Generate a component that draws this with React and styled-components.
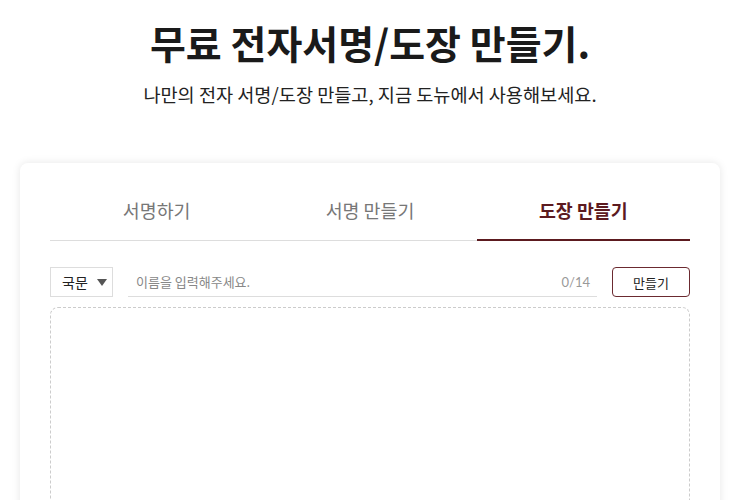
import React, { useState } from "react";
import styled, { createGlobalStyle } from "styled-components";

const Global = createGlobalStyle`
  * { box-sizing: border-box; }
  body {
    margin: 0;
    background: #fff;
    font-family: "Noto Sans CJK KR", "Noto Sans", sans-serif;
    color: #222;
  }
`;

const Page = styled.div`
  display: flex;
  flex-direction: column;
  align-items: center;
  padding-top: 14px;
`;

const Title = styled.h1`
  margin: 0;
  font-size: 39px;
  font-weight: 700;
  line-height: 56px;
  color: #1a1a1a;
`;

const Subtitle = styled.p`
  margin: 11px 0 0;
  font-size: 18.6px;
  line-height: 26px;
  color: #222;
`;

const Card = styled.div`
  margin-top: 56px;
  width: 700px;
  height: 400px;
  background: #fff;
  border-radius: 8px;
  box-shadow: 0 0 8px rgba(0, 0, 0, 0.1);
  padding: 27px 30px 0;
`;

const Tabs = styled.div`
  display: grid;
  grid-template-columns: repeat(3, 1fr);
  border-bottom: 1px solid #ddd;
`;

const Tab = styled.button`
  all: unset;
  cursor: pointer;
  text-align: center;
  padding: 5px 0 14px;
  font-family: "Noto Sans CJK KR", sans-serif;
  font-size: 18.4px;
  line-height: 30px;
  color: ${(p) => (p.$active ? "#5c1a1f" : "#777")};
  font-weight: ${(p) => (p.$active ? 700 : 400)};
  border-bottom: 2px solid ${(p) => (p.$active ? "#5c1a1f" : "transparent")};
  margin-bottom: -1px;
`;

const Row = styled.div`
  display: flex;
  align-items: center;
  margin-top: 26px;
  height: 30px;
`;

const Select = styled.div`
  width: 63px;
  height: 30px;
  border: 1px solid #ddd;
  display: flex;
  align-items: center;
  padding-left: 11px;
  gap: 9px;
  font-size: 14px;
  color: #222;
`;

const Caret = styled.span`
  width: 0;
  height: 0;
  border-left: 5px solid transparent;
  border-right: 5px solid transparent;
  border-top: 7px solid #555;
  margin-top: 1px;
`;

const InputWrap = styled.div`
  flex: 1;
  margin-left: 15px;
  height: 30px;
  border-bottom: 1px solid #ddd;
  display: flex;
  align-items: center;
  padding: 0 7px 0 8px;
`;

const Input = styled.input`
  flex: 1;
  border: none;
  outline: none;
  background: transparent;
  font-family: "Noto Sans CJK KR", sans-serif;
  font-size: 13px;
  color: #222;
  padding: 0;
  &::placeholder { color: #888; }
`;

const Counter = styled.span`
  font-family: "Lato", sans-serif;
  font-size: 13px;
  color: #999;
`;

const MakeButton = styled.button`
  margin-left: 15px;
  width: 78px;
  height: 30px;
  border: 1px solid #6b2a30;
  border-radius: 4px;
  background: #fff;
  font-family: "Noto Sans CJK KR", sans-serif;
  font-size: 13px;
  color: #222;
  cursor: pointer;
`;

const Canvas = styled.div`
  margin-top: 10px;
  height: 300px;
  border: 1px dashed #ccc;
  border-radius: 8px;
`;

export default function App() {
  const [tab, setTab] = useState(2);
  const [name, setName] = useState("");
  const tabs = ["서명하기", "서명 만들기", "도장 만들기"];
  return (
    <>
      <Global />
      <Page>
        <Title>무료 전자서명/도장 만들기.</Title>
        <Subtitle>나만의 전자 서명/도장 만들고, 지금 도뉴에서 사용해보세요.</Subtitle>
        <Card>
          <Tabs>
            {tabs.map((t, i) => (
              <Tab key={t} $active={i === tab} onClick={() => setTab(i)}>
                {t}
              </Tab>
            ))}
          </Tabs>
          <Row>
            <Select>
              국문 <Caret />
            </Select>
            <InputWrap>
              <Input
                placeholder="이름을 입력해주세요."
                maxLength={14}
                value={name}
                onChange={(e) => setName(e.target.value)}
              />
              <Counter>{name.length}/14</Counter>
            </InputWrap>
            <MakeButton>만들기</MakeButton>
          </Row>
          <Canvas />
        </Card>
      </Page>
    </>
  );
}
